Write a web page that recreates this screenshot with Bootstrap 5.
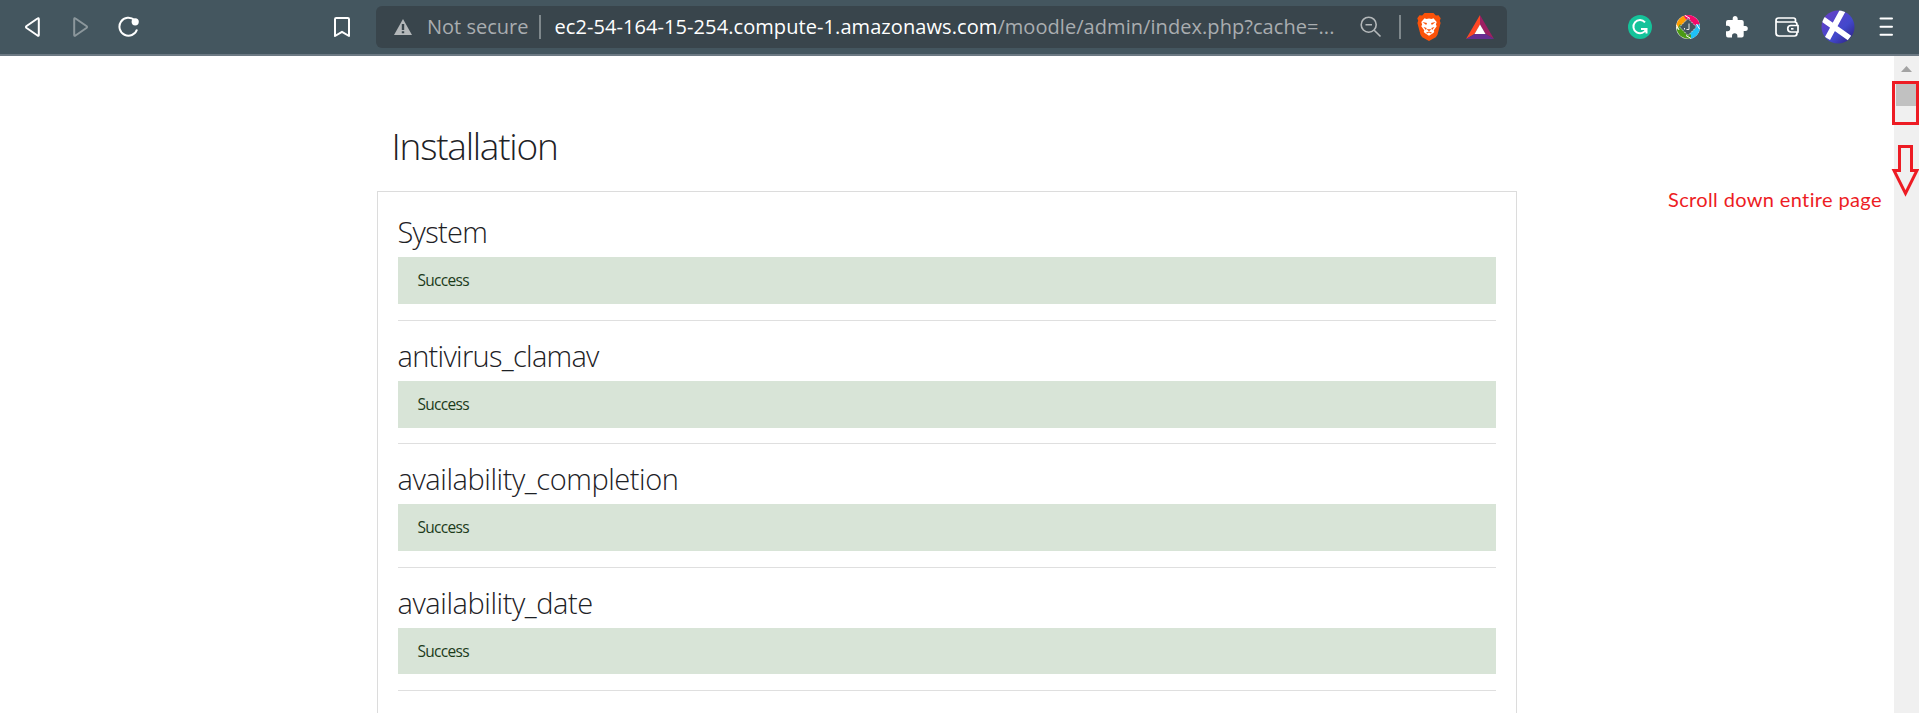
<!DOCTYPE html>
<html lang="en">
<head>
<meta charset="utf-8">
<meta name="viewport" content="width=device-width, initial-scale=1">
<title>Installation</title>
<link href="https://cdn.jsdelivr.net/npm/bootstrap@5.3.0/dist/css/bootstrap.min.css" rel="stylesheet">
<script src="https://cdn.jsdelivr.net/npm/bootstrap@5.3.0/dist/js/bootstrap.bundle.min.js"></script>
<style>
body{font-family:"Open Sans","Noto Sans",sans-serif;background:#fff;overflow:hidden;height:719px}
svg{flex:none;display:block}
.toolbar{height:56px;background:#44565f;border-bottom:2px solid #6c7983}
.nav-icons{width:376px;padding-left:24px;gap:31px}
.reload{margin-left:-2px}
.bookmark{margin-right:25px}
.address{width:1131px;height:42px;background:#39454c;border-radius:6px;padding:0 13px 0 17px;font-size:20px;line-height:42px;color:#a9adb0;white-space:pre}
.address .host{color:#fff;letter-spacing:.08px;margin-left:13px}
.address .path{letter-spacing:.06px}
.vline{width:2px;height:24px;background:#7f888c;flex:none}
.extensions{padding-left:120px}
.page-view{height:657px}
.page-body{padding:66px 0 0 377px}
.page-title{font-weight:300;font-size:37px;line-height:48px;letter-spacing:-1.25px;color:#1d2125;margin:0 0 21px 14.500px}
.results{width:1140px;border:1px solid #dcdcdc;border-bottom:0;padding:5px 20px 60px}
.plugin{height:123.400px;border-bottom:1px solid #dfdfdf;padding-top:17px}
.plugin:first-child{height:124px}
.plugin h3{font-weight:300;font-size:29px;line-height:36px;letter-spacing:-.430px;margin:0 0 7px -.5px;color:#1d2125}
.plugin h3.snug{letter-spacing:-.700px}
.ok{height:46.500px;line-height:46px;background:#d8e4d7;color:#1c3b1a;font-size:15.500px;letter-spacing:-.700px;padding-left:19.500px}
.scrollbar-track{width:25px;background:#f0f0f0;padding-top:10px}
.thumb{width:21px;height:23px;background:#c1c1c1;margin:11px 0 0 2px}
.note-box{left:1892px;top:81px;width:27px;height:44px;border:3px solid #ed1c24}
.note-arrow{left:1891px;top:144px}
.note-text{left:1668px;top:187px;font:20px/24px Lato,sans-serif;letter-spacing:.360px;color:#ed1c24;white-space:nowrap}
</style>
</head>
<body>
<header class="toolbar d-flex align-items-center">
  <div class="nav-icons d-flex align-items-center">
    <svg width="17" height="22" viewBox="0 0 17 22" fill="none" stroke="#fff" stroke-width="2" stroke-linejoin="round"><path d="M14.8 3.2v15.6q0 1.7-1.3.7L2.6 12q-1.3-1 0-2L13.5 2.500q1.300-1 1.300.7z"/></svg>
    <svg width="17" height="22" viewBox="0 0 17 22" fill="none" stroke="#8c979c" stroke-width="2" stroke-linejoin="round"><path d="M2.200 3.200v15.600q0 1.700 1.300.7L14.400 12q1.300-1 0-2L3.500 2.500q-1.300-1-1.300.7z"/></svg>
    <svg class="reload" width="22" height="22" viewBox="0 0 22 22"><path d="M16.500 4A9 9 0 1 0 19 13.500" fill="none" stroke="#fff" stroke-width="2"/><circle cx="17.200" cy="5.800" r="3.600" fill="#fff"/></svg>
    <svg class="bookmark ms-auto" width="18" height="22" viewBox="0 0 18 22" fill="none" stroke="#fff" stroke-width="2" stroke-linejoin="round"><path d="M2 3.200Q2 2 3.200 2H14.800Q16 2 16 3.200V20L9 15.800 2 20z"/></svg>
  </div>
  <div class="address d-flex align-items-center">
    <svg width="20" height="18" viewBox="0 0 20 18"><path d="M10 1 19 17H1z" fill="#b4b8ba"/><path d="M10 6v6M10 13.200v2" stroke="#39454c" stroke-width="2.400"/></svg>
    <span style="margin-left:14px">Not secure</span>
    <span class="vline" style="margin-left:11px"></span>
    <span class="host">ec2-54-164-15-254.compute-1.amazonaws.com</span><span class="path">/moodle/admin/index.php?cache=...</span>
    <svg class="ms-auto" width="22" height="22" viewBox="0 0 22 22" fill="none" stroke="#b4b8ba" stroke-width="1.600"><circle cx="8.700" cy="8.700" r="7.500"/><path d="M5.500 8.700h6.500M14.200 14.200l6.300 6.300"/></svg>
    <span class="vline" style="margin-left:17px"></span>
    <svg style="margin-left:16px" width="24" height="28" viewBox="0 0 24 28"><path d="M7.500 0h9l2.300 2.500 2.700-.3 2.200 3-.9 2.500.8 2.400-3.100 11.700-1.700 2.400-6.800 3.800-6.800-3.800-1.700-2.400L.4 10.100l.8-2.400-.9-2.500 2.200-3 2.700.3z" fill="#fb5209"/><path d="M7.500 5.300l2 .6 2.500-.5 2.500.5 2-.6 3.200 3.800-.8 2.300.8 1.900-2.200 2.900-.8 1.300.6 1.500-1.800 1.500-3.500 2.200-3.500-2.200-1.800-1.500.6-1.500-.8-1.300-2.200-2.900.8-1.900-.8-2.300z" fill="#fff"/><path d="M5.500 9l4.500 1-.8 2zM18.500 9l-4.500 1 .8 2zM6.500 14l3.200 1-.8 2zM17.500 14l-3.200 1 .8 2zM9.500 16.300h5L12 18.300zM9 19.800l3-1.300 3 1.300-1 .6-2-.8-2 .8z" fill="#fb5209"/></svg>
    <svg style="margin-left:25px" width="28" height="25" viewBox="0 0 28 25"><path d="M14 0v10L8.500 19 0 24z" fill="#ff4724"/><path d="M14 0v10l5.500 9 8.500 5z" fill="#9e1f63"/><path d="M0 24l8.500-5h11l8.500 5z" fill="#662d91"/><path d="M14 9.500 19.500 19h-11z" fill="#fff"/></svg>
  </div>
  <div class="extensions d-flex align-items-center">
    <svg width="26" height="26" viewBox="0 0 26 26"><circle cx="13" cy="13" r="12" fill="#15c39a"/><path d="M18 8.300A6.600 6.600 0 1 0 19.200 15M14 15h5.500v4.500" fill="none" stroke="#fff" stroke-width="2"/></svg>
    <svg style="margin-left:22px" width="26" height="26" viewBox="0 0 26 26"><circle cx="13" cy="13" r="12" fill="#eee"/><path d="M1.200 12A12 12 0 0 1 11 1.300L16 4 4 15z" fill="#ff9d00"/><path d="M9 1.800A12 12 0 0 1 24.500 10L21 15 10 4z" fill="#f5096b"/><path d="M24.800 11A12 12 0 0 1 15 24.800L10 21 22 10z" fill="#1fc0f5"/><path d="M16 24.500A12 12 0 0 1 1.800 16L5 10 16 21z" fill="#4b9a14"/><path d="M1.500 11l2.500 5M10 1.500l5 3M24.500 15l-3-5M16 24.500l-5-3" stroke="#fff"/><path d="M13 4.500 21.500 13 13 21.500 4.500 13z" fill="#44565f" stroke="#d8dcdd" stroke-dasharray="1.500 1"/><path d="M14 9.500v6h-2.500M9.500 14v1.500" fill="none" stroke="#e8eaeb"/></svg>
    <svg style="margin-left:24px" width="23" height="23" viewBox="0 0 23 23"><path d="M20.300 10h-1.600V6q0-2-2-2h-4V2.600a2.500 2.500 0 0 0-5 0V4H3Q1 4 1 6v3.800h1.500a2.700 2.700 0 0 1 0 5.400H1V19q0 2.500 2 2.500h4V20a2.700 2.700 0 0 1 5.400 0v1.500h4.300q2 0 2-2V15h1.600a2.500 2.500 0 0 0 0-5z" fill="#fff"/></svg>
    <svg style="margin-left:26px" width="26" height="22" viewBox="0 0 26 22" fill="none" stroke="#fff" stroke-width="1.700"><path d="M2 4.500V17q0 3 3 3h15.500q2.500 0 2.500-3V8.500Q23 6 20.500 6H4Q2 6 2 4.500 2 2 4.500 2h15Q21.500 2 21.500 4v2"/><path d="M24 9.500h-7a3.200 3.200 0 0 0 0 6.500h7z" fill="#44565f"/><path d="M17 12.800h2.500"/></svg>
    <svg style="margin-left:21px" width="34" height="34" viewBox="0 0 34 34"><defs><linearGradient id="avatar" x1="0" y1="0" x2="1" y2="1"><stop stop-color="#6a3fc6"/><stop offset=".6" stop-color="#4248cc"/><stop offset="1" stop-color="#2b1c78"/></linearGradient><clipPath id="disc"><circle cx="17" cy="17" r="16.500"/></clipPath></defs><circle cx="17" cy="17" r="16.500" fill="url(#avatar)"/><g clip-path="url(#disc)" stroke="#fff" stroke-width="5.800"><path d="M22.500-1 6.500 28.500M1 8.500 28.500 28"/></g></svg>
    <svg style="margin-left:23px" width="16" height="22" viewBox="0 0 16 22" stroke="#fff" stroke-width="2" stroke-linecap="round"><path d="M2.500 2.500h11.500M2.500 10.700h11.500M2.500 18.700h11.500"/></svg>
  </div>
</header>
<div class="page-view d-flex overflow-hidden">
  <main class="page-body flex-grow-1">
    <h2 class="page-title">Installation</h2>
    <div class="results">
      <section class="plugin"><h3 class="snug">System</h3><div class="ok">Success</div></section>
      <section class="plugin"><h3 class="snug">antivirus_clamav</h3><div class="ok">Success</div></section>
      <section class="plugin"><h3>availability_completion</h3><div class="ok">Success</div></section>
      <section class="plugin"><h3>availability_date</h3><div class="ok">Success</div></section>
    </div>
  </main>
  <div class="scrollbar-track">
    <svg style="margin-left:7px" width="11" height="6" viewBox="0 0 11 6"><path d="M5.500 0 11 6H0z" fill="#a3a3a3"/></svg>
    <div class="thumb"></div>
  </div>
</div>
<div class="note-box position-absolute"></div>
<svg class="note-arrow position-absolute" width="28" height="54" viewBox="0 0 28 54" fill="none" stroke="#ed1c24" stroke-width="3"><path d="M8.500 2.500h12v24h5.500L14.500 49.500 3 26.500h5.500z"/></svg>
<div class="note-text position-absolute">Scroll down entire page</div>
</body>
</html>
